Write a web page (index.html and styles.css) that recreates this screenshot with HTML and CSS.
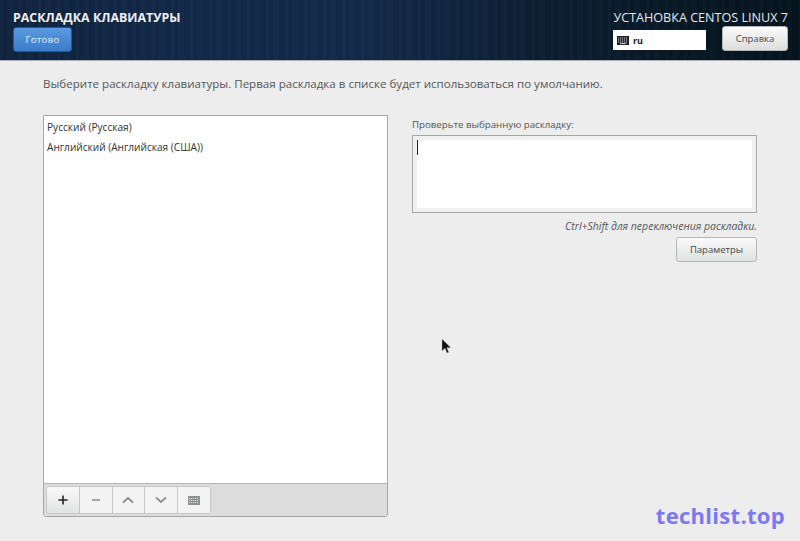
FILE: index.html
```html
<!DOCTYPE html>
<html lang="ru">
<head>
<meta charset="utf-8">
<title>Раскладка клавиатуры</title>
<link rel="stylesheet" href="styles.css">
</head>
<body>
<header class="topbar">
  <div class="topbar-left">
    <h1 class="spoke-title">РАСКЛАДКА КЛАВИАТУРЫ</h1>
    <button class="btn btn-done">Готово</button>
  </div>
  <div class="topbar-right">
    <div class="product">УСТАНОВКА CENTOS LINUX 7</div>
    <div class="topbar-controls">
      <div class="layout-indicator">
        <svg class="kbd-icon" width="12" height="9" viewBox="0 0 12 9"><rect width="12" height="9" fill="#1c1c1c"/><path d="M1 2h10M1 4h10M1 6h10" stroke="#fff" stroke-width=".8" stroke-dasharray="1.200 .8"/><path d="M3 7.600h6" stroke="#fff" stroke-width=".8"/></svg>
        <span>ru</span>
      </div>
      <button class="btn btn-help">Справка</button>
    </div>
  </div>
</header>
<main class="content">
  <p class="intro">Выберите раскладку клавиатуры. Первая раскладка в списке будет использоваться по умолчанию.</p>
  <div class="columns">
    <section class="list-panel">
      <ul class="layout-list">
        <li>Русский (Русская)</li>
        <li>Английский (Английская (США))</li>
      </ul>
      <div class="toolbar">
        <div class="tool-group">
          <button class="tool tool-active"><svg width="12" height="12" viewBox="0 0 12 12"><path d="M6 1.500v9M1.500 6h9" stroke="#222" stroke-width="1.600"/></svg></button>
          <button class="tool"><svg width="12" height="12" viewBox="0 0 12 12"><path d="M2 6h8" stroke="#8a8c8c" stroke-width="1.600"/></svg></button>
          <button class="tool"><svg width="12" height="12" viewBox="0 0 12 12"><path d="M1 8.500L6 4l5 4.500" fill="none" stroke="#8a8c8c" stroke-width="1.700"/></svg></button>
          <button class="tool"><svg width="12" height="12" viewBox="0 0 12 12"><path d="M1 3.500L6 8l5-4.500" fill="none" stroke="#8a8c8c" stroke-width="1.700"/></svg></button>
          <button class="tool"><svg width="12" height="9" viewBox="0 0 12 9"><rect width="12" height="9" fill="#8e9090"/><path d="M1 2.500h10M1 4.500h10M1 6.500h10" stroke="#eee" stroke-width=".8" stroke-dasharray="1.200 .8"/></svg></button>
        </div>
      </div>
    </section>
    <section class="test-panel">
      <label class="test-label">Проверьте выбранную раскладку:</label>
      <div class="test-box"><div class="test-inner"><span class="caret"></span></div></div>
      <p class="hint">Ctrl+Shift для переключения раскладки.</p>
      <div class="options-row"><button class="btn btn-options">Параметры</button></div>
    </section>
  </div>
</main>
<svg class="pointer" width="12" height="17" viewBox="0 0 12 17"><path d="M1 1v12l3-2.800 2 4.800 1.800-.8-2-4.500h4z" fill="#111" stroke="#bbb" stroke-width=".4"/></svg>
<div class="watermark">techlist.top</div>
</body>
</html>
```
FILE: styles.css
```css
* { box-sizing: border-box; }
html, body { margin: 0; padding: 0; }
body {
  width: 800px;
  height: 541px;
  overflow: hidden;
  background: #ededed;
  font-family: "Open Sans", "Noto Sans", sans-serif;
  color: #2e3436;
  position: relative;
}
.topbar {
  height: 61px;
  display: flex;
  justify-content: space-between;
  padding: 11px 12px 0 13px;
  border-bottom: 1px solid #a9adb0;
  background:
    repeating-linear-gradient(90deg, rgba(255,255,255,.018) 0 3px, rgba(0,0,0,.03) 3px 7px, rgba(255,255,255,.012) 7px 13px, rgba(0,0,0,.02) 13px 19px),
    linear-gradient(90deg, #10243f 0%, #12294a 25%, #132a4a 45%, #0d2035 65%, #071825 85%, #06141e 100%);
}
.spoke-title {
  margin: 0;
  font-size: 12.400px;
  line-height: 14px;
  font-weight: 700;
  color: #eef0f2;
  white-space: nowrap;
}
.btn {
  font-family: inherit;
  cursor: default;
  border-radius: 3px;
  padding: 0;
}
.btn-done {
  display: block;
  margin-top: 2px;
  width: 59px;
  height: 25px;
  font-size: 9.500px;
  letter-spacing: .3px;
  color: #e6f0fa;
  border: 1px solid #1f5a9c;
  background: linear-gradient(180deg, #5c9ae0, #3b7cc9);
}
.topbar-right {
  display: flex;
  flex-direction: column;
  align-items: flex-end;
  width: 175px;
}
.product {
  font-size: 12.600px;
  line-height: 14px;
  color: #e4e7ea;
  white-space: nowrap;
}
.topbar-controls {
  display: flex;
  justify-content: space-between;
  width: 100%;
  margin-top: 1px;
}
.layout-indicator {
  width: 93px;
  height: 20px;
  margin-top: 4px;
  background: #fff;
  display: flex;
  align-items: center;
  gap: 4px;
  padding-left: 4px;
  font-size: 9px;
  font-weight: 700;
  color: #222;
}
.btn-help {
  width: 66px;
  height: 25px;
  font-size: 9.500px;
  color: #45494b;
  border: 1px solid #b5b7b7;
  background: linear-gradient(180deg, #fbfbfb, #dcdddd);
}
.content {
  padding: 14px 43px 0;
}
.intro {
  margin: 0;
  font-size: 11.570px;
  line-height: 17px;
  color: #53575a;
  white-space: nowrap;
}
.columns {
  display: flex;
  margin-top: 23px;
  gap: 24px;
}
.list-panel {
  width: 345px;
  height: 402px;
  display: flex;
  flex-direction: column;
  background: #fff;
  border: 1px solid #a6a8a8;
  border-radius: 0 0 3px 3px;
}
.layout-list {
  list-style: none;
  margin: 0;
  padding: 1px 0 0 3px;
  flex: 1;
  font-size: 10.100px;
  color: #2e3436;
}
.layout-list li { height: 19.500px; line-height: 20px; white-space: nowrap; }
.toolbar {
  height: 33px;
  padding: 2px 2px 0;
  border-top: 1px solid #b5b7b7;
  background: #dcdcdc;
  border-radius: 0 0 3px 3px;
}
.tool-group {
  display: flex;
  height: 28px;
  width: 165px;
  border: 1px solid #c6c8c8;
  border-radius: 3px;
  overflow: hidden;
  background: #f1f1f1;
}
.tool {
  flex: 1;
  border: 0;
  border-right: 1px solid #c6c8c8;
  padding: 0;
  background: #f3f3f3;
  display: flex;
  align-items: center;
  justify-content: center;
}
.tool:last-child { border-right: 0; }
.tool-active { background: linear-gradient(180deg, #f9f9f9, #e2e3e3); }
.test-panel {
  width: 345px;
}
.test-label {
  display: block;
  margin-top: 3px;
  font-size: 9.700px;
  line-height: 14px;
  color: #53575a;
  white-space: nowrap;
}
.test-box {
  margin-top: 3px;
  height: 78px;
  border: 1px solid #a6a8a8;
  padding: 4px;
  background: #f0f0f0;
}
.test-inner {
  height: 100%;
  background: #fff;
}
.caret {
  display: block;
  width: 1px;
  height: 15px;
  background: #222;
}
.hint {
  margin: 7px 0 0;
  text-align: right;
  font-size: 10.500px;
  line-height: 13px;
  font-style: italic;
  color: #53575a;
  white-space: nowrap;
}
.options-row {
  display: flex;
  justify-content: flex-end;
  margin-top: 4px;
}
.btn-options {
  width: 81px;
  height: 25px;
  font-size: 9.500px;
  color: #45494b;
  border: 1px solid #b5b7b7;
  background: linear-gradient(180deg, #fafafa, #e0e1e1);
}
.pointer {
  position: absolute;
  left: 441px;
  top: 338px;
}
.watermark {
  position: absolute;
  right: 15px;
  top: 501px;
  font-size: 22px;
  line-height: 28px;
  font-weight: 700;
  color: #7c78f0;
  letter-spacing: .3px;
}
```
